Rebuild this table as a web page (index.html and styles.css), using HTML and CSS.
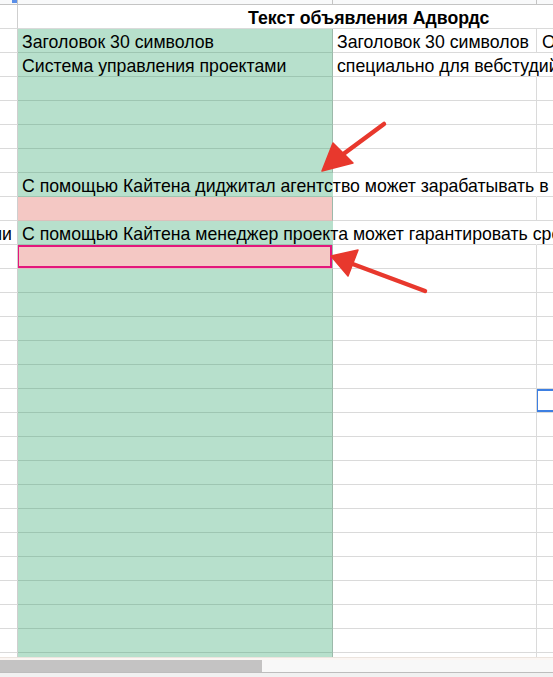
FILE: index.html
```html
<!DOCTYPE html>
<html lang="ru">
<head>
<meta charset="utf-8">
<link rel="stylesheet" href="styles.css">
</head>
<body>
<div class="app">
  <div class="sheet">
    <div class="row strip">
      <div class="hcell a"><span class="freeze"></span></div>
      <div class="hcell b"></div>
      <div class="hcell c"></div>
      <div class="hcell d"></div>
    </div>
    <div class="row">
      <div class="cell a"></div>
      <div class="cell merged"><span class="title">Текст объявления Адвордс</span></div>
    </div>
    <div class="row">
      <div class="cell a"></div>
      <div class="cell b green">Заголовок 30 символов</div>
      <div class="cell c">Заголовок 30 символов</div>
      <div class="cell d">Описание</div>
    </div>
    <div class="row">
      <div class="cell a"></div>
      <div class="cell b green">Система управления проектами</div>
      <div class="cell c noright"><span class="over">специально для вебстудий</span></div>
      <div class="cell d"></div>
    </div>
    <div class="row"><div class="cell a"></div><div class="cell b green"></div><div class="cell c"></div><div class="cell d"></div></div>
    <div class="row"><div class="cell a"></div><div class="cell b green"></div><div class="cell c"></div><div class="cell d"></div></div>
    <div class="row"><div class="cell a"></div><div class="cell b green"></div><div class="cell c"></div><div class="cell d"></div></div>
    <div class="row"><div class="cell a"></div><div class="cell b green"></div><div class="cell c"></div><div class="cell d"></div></div>
    <div class="row">
      <div class="cell a"></div>
      <div class="cell b green noright"><span class="over">С помощью Кайтена диджитал агентство может зарабатывать в два раза больше</span></div>
      <div class="cell c noright"></div>
      <div class="cell d"></div>
    </div>
    <div class="row"><div class="cell a"></div><div class="cell b pink"></div><div class="cell c"></div><div class="cell d"></div></div>
    <div class="row">
      <div class="cell a right">ии</div>
      <div class="cell b green noright"><span class="over">С помощью Кайтена менеджер проекта может гарантировать сроки клиенту</span></div>
      <div class="cell c noright"></div>
      <div class="cell d"></div>
    </div>
    <div class="row"><div class="cell a"></div><div class="cell b pink boxed"></div><div class="cell c"></div><div class="cell d"></div></div>
    <div class="row"><div class="cell a"></div><div class="cell b green"></div><div class="cell c"></div><div class="cell d"></div></div>
    <div class="row"><div class="cell a"></div><div class="cell b green"></div><div class="cell c"></div><div class="cell d"></div></div>
    <div class="row"><div class="cell a"></div><div class="cell b green"></div><div class="cell c"></div><div class="cell d"></div></div>
    <div class="row"><div class="cell a"></div><div class="cell b green"></div><div class="cell c"></div><div class="cell d"></div></div>
    <div class="row"><div class="cell a"></div><div class="cell b green"></div><div class="cell c"></div><div class="cell d"></div></div>
    <div class="row"><div class="cell a"></div><div class="cell b green"></div><div class="cell c"></div><div class="cell d selected"></div></div>
    <div class="row"><div class="cell a"></div><div class="cell b green"></div><div class="cell c"></div><div class="cell d"></div></div>
    <div class="row"><div class="cell a"></div><div class="cell b green"></div><div class="cell c"></div><div class="cell d"></div></div>
    <div class="row"><div class="cell a"></div><div class="cell b green"></div><div class="cell c"></div><div class="cell d"></div></div>
    <div class="row"><div class="cell a"></div><div class="cell b green"></div><div class="cell c"></div><div class="cell d"></div></div>
    <div class="row"><div class="cell a"></div><div class="cell b green"></div><div class="cell c"></div><div class="cell d"></div></div>
    <div class="row"><div class="cell a"></div><div class="cell b green"></div><div class="cell c"></div><div class="cell d"></div></div>
    <div class="row"><div class="cell a"></div><div class="cell b green"></div><div class="cell c"></div><div class="cell d"></div></div>
    <div class="row"><div class="cell a"></div><div class="cell b green"></div><div class="cell c"></div><div class="cell d"></div></div>
    <div class="row"><div class="cell a"></div><div class="cell b green"></div><div class="cell c"></div><div class="cell d"></div></div>
    <div class="row"><div class="cell a"></div><div class="cell b green"></div><div class="cell c"></div><div class="cell d"></div></div>
    <div class="row"><div class="cell a"></div><div class="cell b green"></div><div class="cell c"></div><div class="cell d"></div></div>
  </div>
  <div class="hscroll">
    <div class="track"><div class="thumb"></div></div>
    <div class="tabs"></div>
  </div>
  <svg class="arrows" width="553" height="677" viewBox="0 0 553 677" aria-hidden="true">
    <g fill="#e8382d" stroke="#e8382d" stroke-linejoin="round">
      <line x1="384" y1="124" x2="338" y2="158" stroke-width="4.5" stroke-linecap="round"/>
      <polygon points="322,171 333,143 353,163" stroke-width="1.5"/>
      <line x1="425" y1="291" x2="350" y2="263" stroke-width="4.5" stroke-linecap="round"/>
      <polygon points="331,256 358,250 348,276" stroke-width="1.5"/>
    </g>
  </svg>
</div>
</body>
</html>
```

FILE: styles.css
```css
html, body {
  margin: 0;
  padding: 0;
  background: #ffffff;
}
body {
  width: 553px;
  height: 677px;
  overflow: hidden;
  font-family: "Liberation Sans", Arial, sans-serif;
  font-size: 17.7px;
  color: #000000;
}
.app {
  position: relative;
  width: 553px;
  height: 677px;
  display: flex;
  flex-direction: column;
  overflow: hidden;
}
.sheet {
  flex: 1;
  overflow: hidden;
  display: flex;
  flex-direction: column;
}
.row {
  display: grid;
  grid-template-columns: 18px 315px 204px 1fr;
  height: 24px;
  flex: none;
}
.strip {
  height: 5px;
  background: #f8f9fa;
}
.hcell {
  box-sizing: border-box;
  border-bottom: 1px solid #c4c4c4;
  border-right: 1px solid #c4c4c4;
  position: relative;
}
.hcell.d { border-right: none; }
.freeze {
  position: absolute;
  right: 0;
  top: 0;
  width: 5px;
  height: 3px;
  background: #5b8fe8;
}
.cell {
  box-sizing: border-box;
  height: 24px;
  border-bottom: 1px solid #dadada;
  border-right: 1px solid #dadada;
  padding: 0 4px 0 4px;
  line-height: 20px;
  display: flex;
  align-items: flex-end;
  white-space: nowrap;
  overflow: hidden;
  position: relative;
  background: #ffffff;
}
.cell.a { border-right-color: #cfcfcf; padding: 0; }
.cell.right { justify-content: flex-end; padding-right: 5px; overflow: hidden; }
.cell.d { border-right: none; padding-left: 5px; }
.cell.merged {
  grid-column: 2 / 5;
  border-right: none;
  padding-left: 230px;
}
.title { font-weight: bold; }
.green {
  background: #b7e0cc;
  border-bottom-color: #9ec6b2;
  border-right-color: #9cb9aa;
}
.pink {
  background: #f4c8c4;
  border-bottom-color: #dcc0bc;
  border-right-color: #9cb9aa;
}
.noright {
  border-right-color: transparent;
  overflow: visible;
}
.over {
  position: relative;
  z-index: 2;
  white-space: nowrap;
}
.boxed::after {
  content: "";
  position: absolute;
  left: -2px;
  top: -1px;
  right: -1px;
  bottom: -1px;
  border: 3px solid #e3177c;
}
.selected::after {
  content: "";
  position: absolute;
  left: -2px;
  top: -1px;
  right: -6px;
  bottom: -1px;
  border: 3px solid #3d7fe2;
}
.hscroll {
  flex: none;
  height: 19px;
  display: flex;
  flex-direction: column;
  background: #fbf6f3;
  border-top: 1px solid #ece4de;
}
.track {
  margin-top: 2px;
  height: 12px;
  background: #f8f8f8;
  display: flex;
}
.thumb {
  width: 262px;
  background: #c4c3c3;
}
.tabs {
  flex: 1;
  border-top: 1px solid #bdbdbd;
  background: #f1f1f1;
}
.arrows {
  position: absolute;
  left: 0;
  top: 0;
  pointer-events: none;
  z-index: 5;
}
```
